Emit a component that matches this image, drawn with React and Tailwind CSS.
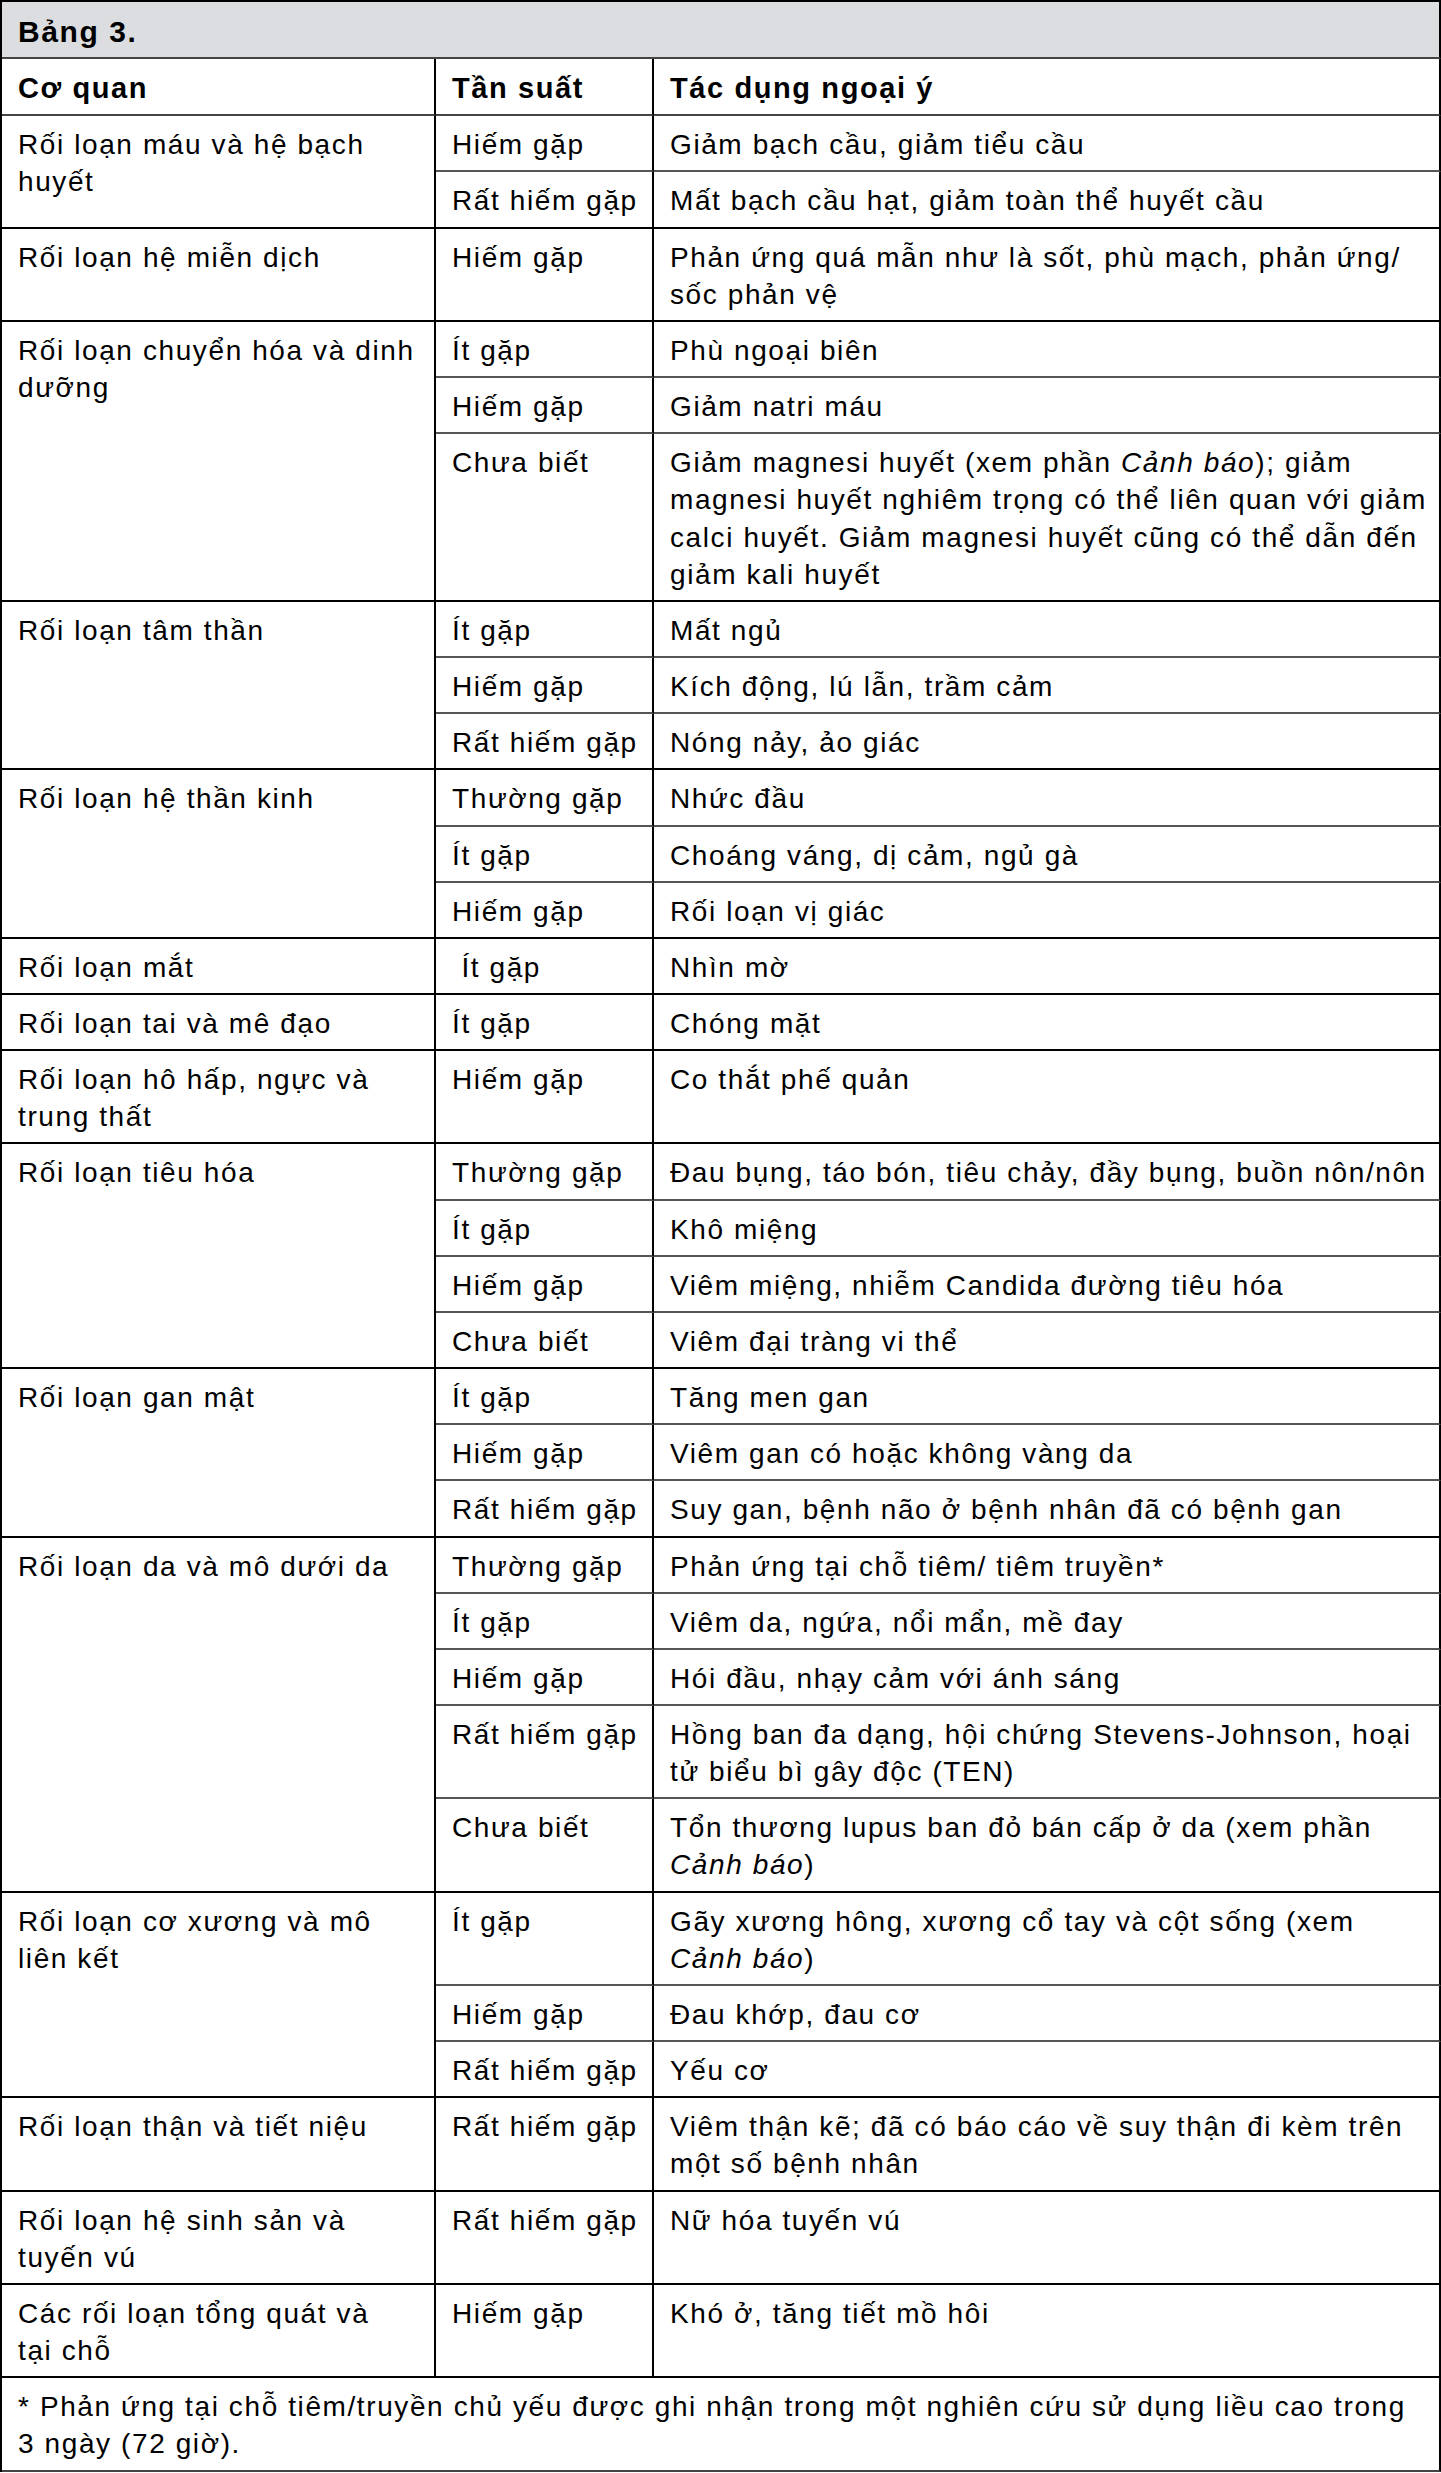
const C = ({ children }) => <i>{children}</i>

const groups = [
  {
    organ: ['Rối loạn máu và hệ bạch', 'huyết'],
    rows: [
      ['Hiếm gặp', ['Giảm bạch cầu, giảm tiểu cầu']],
      ['Rất hiếm gặp', ['Mất bạch cầu hạt, giảm toàn thể huyết cầu']],
    ],
  },
  {
    organ: ['Rối loạn hệ miễn dịch'],
    rows: [['Hiếm gặp', ['Phản ứng quá mẫn như là sốt, phù mạch, phản ứng/', 'sốc phản vệ']]],
  },
  {
    organ: ['Rối loạn chuyển hóa và dinh', 'dưỡng'],
    rows: [
      ['Ít gặp', ['Phù ngoại biên']],
      ['Hiếm gặp', ['Giảm natri máu']],
      [
        'Chưa biết',
        [
          <>Giảm magnesi huyết (xem phần <C>Cảnh báo</C>); giảm</>,
          'magnesi huyết nghiêm trọng có thể liên quan với giảm',
          'calci huyết. Giảm magnesi huyết cũng có thể dẫn đến',
          'giảm kali huyết',
        ],
      ],
    ],
  },
  {
    organ: ['Rối loạn tâm thần'],
    rows: [
      ['Ít gặp', ['Mất ngủ']],
      ['Hiếm gặp', ['Kích động, lú lẫn, trầm cảm']],
      ['Rất hiếm gặp', ['Nóng nảy, ảo giác']],
    ],
  },
  {
    organ: ['Rối loạn hệ thần kinh'],
    rows: [
      ['Thường gặp', ['Nhức đầu']],
      ['Ít gặp', ['Choáng váng, dị cảm, ngủ gà']],
      ['Hiếm gặp', ['Rối loạn vị giác']],
    ],
  },
  { organ: ['Rối loạn mắt'], rows: [['\u00a0Ít gặp', ['Nhìn mờ']]] },
  { organ: ['Rối loạn tai và mê đạo'], rows: [['Ít gặp', ['Chóng mặt']]] },
  { organ: ['Rối loạn hô hấp, ngực và', 'trung thất'], rows: [['Hiếm gặp', ['Co thắt phế quản']]] },
  {
    organ: ['Rối loạn tiêu hóa'],
    rows: [
      ['Thường gặp', ['Đau bụng, táo bón, tiêu chảy, đầy bụng, buồn nôn/nôn']],
      ['Ít gặp', ['Khô miệng']],
      ['Hiếm gặp', ['Viêm miệng, nhiễm Candida đường tiêu hóa']],
      ['Chưa biết', ['Viêm đại tràng vi thể']],
    ],
  },
  {
    organ: ['Rối loạn gan mật'],
    rows: [
      ['Ít gặp', ['Tăng men gan']],
      ['Hiếm gặp', ['Viêm gan có hoặc không vàng da']],
      ['Rất hiếm gặp', ['Suy gan, bệnh não ở bệnh nhân đã có bệnh gan']],
    ],
  },
  {
    organ: ['Rối loạn da và mô dưới da'],
    rows: [
      ['Thường gặp', ['Phản ứng tại chỗ tiêm/ tiêm truyền*']],
      ['Ít gặp', ['Viêm da, ngứa, nổi mẩn, mề đay']],
      ['Hiếm gặp', ['Hói đầu, nhạy cảm với ánh sáng']],
      ['Rất hiếm gặp', ['Hồng ban đa dạng, hội chứng Stevens-Johnson, hoại', 'tử biểu bì gây độc (TEN)']],
      ['Chưa biết', ['Tổn thương lupus ban đỏ bán cấp ở da (xem phần', <><C>Cảnh báo</C>)</>]],
    ],
  },
  {
    organ: ['Rối loạn cơ xương và mô', 'liên kết'],
    rows: [
      ['Ít gặp', ['Gãy xương hông, xương cổ tay và cột sống (xem', <><C>Cảnh báo</C>)</>]],
      ['Hiếm gặp', ['Đau khớp, đau cơ']],
      ['Rất hiếm gặp', ['Yếu cơ']],
    ],
  },
  {
    organ: ['Rối loạn thận và tiết niệu'],
    rows: [['Rất hiếm gặp', ['Viêm thận kẽ; đã có báo cáo về suy thận đi kèm trên', 'một số bệnh nhân']]],
  },
  { organ: ['Rối loạn hệ sinh sản và', 'tuyến vú'], rows: [['Rất hiếm gặp', ['Nữ hóa tuyến vú']]] },
  { organ: ['Các rối loạn tổng quát và', 'tại chỗ'], rows: [['Hiếm gặp', ['Khó ở, tăng tiết mồ hôi']]] },
]

const cell = 'align-top pl-4 pr-2 pb-[7px] border-r-2 border-b-2'

function Lines({ lines }) {
  return lines.map((l, i) => (
    <div key={i} className="whitespace-nowrap">
      {l}
    </div>
  ))
}

export default function App() {
  return (
    <div className="w-[1441px] bg-white text-black font-['Liberation_Sans',Arial,sans-serif] text-[28px] leading-[37.15px] tracking-[1.6px]">
      <table className="w-full table-fixed border-separate border-spacing-0 border-l-2 border-t-2 border-black">
        <colgroup>
          <col className="w-[434px]" />
          <col className="w-[218px]" />
          <col />
        </colgroup>
        <tbody>
          <tr>
            <td colSpan={3} className={`${cell} pt-[11px] text-[30px] font-bold bg-[#dcdde0] border-r-black border-b-[#444]`}>
              Bảng 3.
            </td>
          </tr>
          <tr>
            <td className={`${cell} pt-[11px] text-[29px] font-bold border-r-black border-b-[#444]`}>Cơ quan</td>
            <td className={`${cell} pt-[11px] text-[29px] font-bold border-r-black border-b-[#444]`}>Tần suất</td>
            <td className={`${cell} pt-[11px] text-[29px] font-bold border-r-black border-b-[#444]`}>Tác dụng ngoại ý</td>
          </tr>
          {groups.map((g, gi) =>
            g.rows.map(([freq, effect], ri) => {
              const last = ri === g.rows.length - 1
              const sub = last ? 'border-b-black' : 'border-b-[#555]'
              return (
                <tr key={`${gi}-${ri}`}>
                  {ri === 0 && (
                    <td rowSpan={g.rows.length} className={`${cell} pt-[10px] border-r-black border-b-black`}>
                      <Lines lines={g.organ} />
                    </td>
                  )}
                  <td className={`${cell} pt-[10px] border-r-black ${sub}`}>{freq}</td>
                  <td className={`${cell} pt-[10px] border-r-black ${sub}`}>
                    <Lines lines={effect} />
                  </td>
                </tr>
              )
            })
          )}
          <tr>
            <td colSpan={3} className={`${cell} pt-[10px] border-r-black border-b-[#444]`}>
              <div className="whitespace-nowrap">
                * Phản ứng tại chỗ tiêm/truyền chủ yếu được ghi nhận trong một nghiên cứu sử dụng liều cao trong
              </div>
              <div>3 ngày (72 giờ).</div>
            </td>
          </tr>
        </tbody>
      </table>
    </div>
  )
}
